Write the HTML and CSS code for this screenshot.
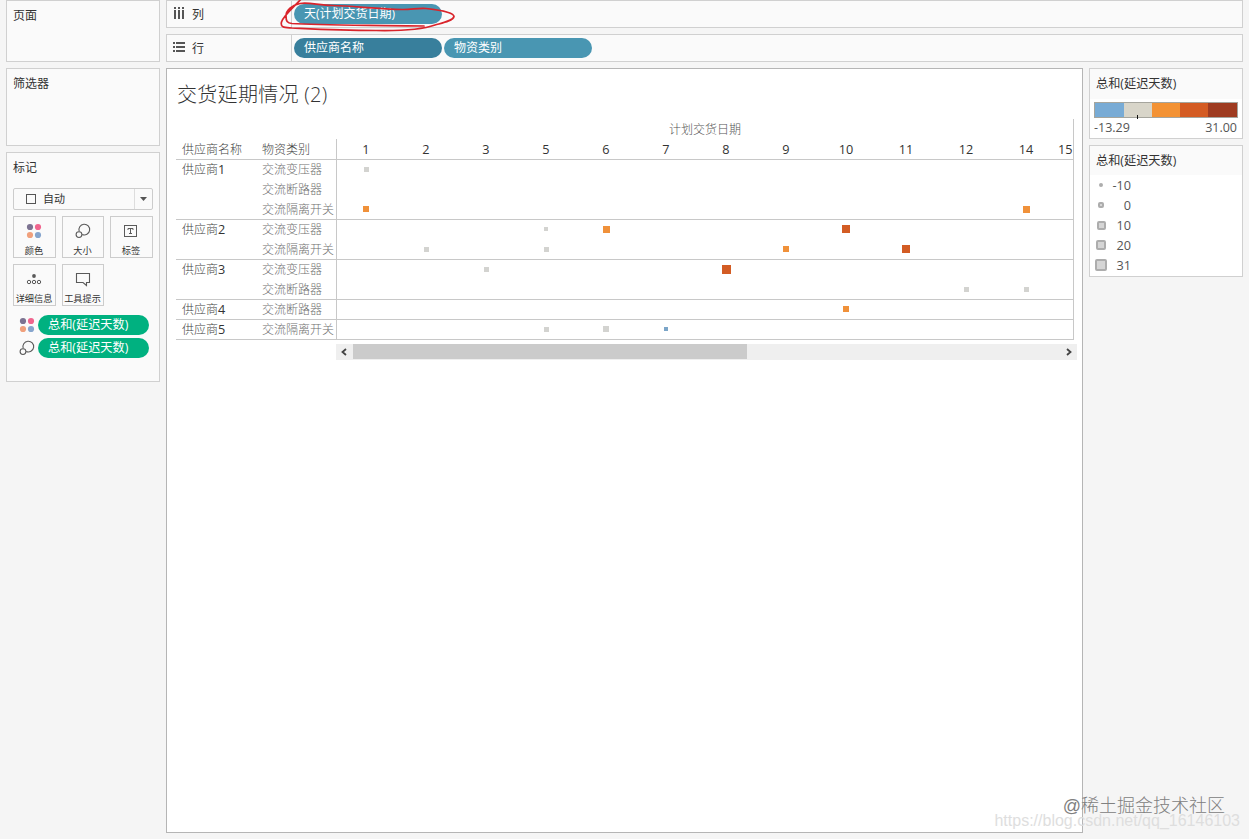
FILE: index.html
```html
<!DOCTYPE html>
<html lang="zh-CN">
<head>
<meta charset="utf-8">
<title>交货延期情况</title>
<link rel="stylesheet" href="styles.css">
</head>
<body>
<svg class="defs" width="0" height="0">
  <symbol id="i-color" viewBox="0 0 16 16"><circle cx="4" cy="4" r="3.1" fill="#7c7391"/><circle cx="12" cy="4" r="3.1" fill="#f0658e"/><circle cx="4" cy="12" r="3.1" fill="#f0a07c"/><circle cx="12" cy="12" r="3.1" fill="#86a5cd"/></symbol>
  <symbol id="i-size" viewBox="0 0 16 16"><g fill="none" stroke="#5a5a5a" stroke-width="1.100"><path d="M4.200 8.400A5.400 5.400 0 1 1 7.200 11.600"/><circle cx="4" cy="11.600" r="2.900"/></g></symbol>
</svg>
<div class="app">
  <aside class="side">
    <section class="card pages"><h2>页面</h2></section>
    <section class="card filters"><h2>筛选器</h2></section>
    <section class="card marks">
      <h2>标记</h2>
      <div class="select"><i class="box"></i><span>自动</span><b><svg width="7" height="4"><path d="M0 0H7L3.500 4Z" fill="#555"/></svg></b></div>
      <div class="buttons">
        <div class="btn"><svg width="16" height="16"><use href="#i-color"/></svg><span>颜色</span></div>
        <div class="btn"><svg width="16" height="16"><use href="#i-size"/></svg><span>大小</span></div>
        <div class="btn"><svg width="16" height="16" fill="none" stroke="#5a5a5a"><rect x="1.500" y="2.500" width="12" height="11"/><path d="M5 7V5.500H10V7M7.500 5.500V10.500M6 10.500H9"/></svg><span>标签</span></div>
        <div class="btn"><svg width="16" height="16" fill="none" stroke="#5a5a5a"><circle cx="8" cy="5" r="1.900" fill="#5a5a5a" stroke="none"/><circle cx="3" cy="11" r="1.700"/><circle cx="8" cy="11" r="1.700"/><circle cx="13" cy="11" r="1.700"/></svg><span>详细信息</span></div>
        <div class="btn"><svg width="16" height="16" fill="none" stroke="#5a5a5a" stroke-width="1.100"><path d="M1.500 2.500H14.500V11.500H11.500V14.500L8 11.500H1.500Z"/></svg><span>工具提示</span></div>
      </div>
      <div class="encodings">
        <div class="enc"><svg width="16" height="16"><use href="#i-color"/></svg><span class="pill green">总和(延迟天数)</span></div>
        <div class="enc"><svg width="16" height="16"><use href="#i-size"/></svg><span class="pill green">总和(延迟天数)</span></div>
      </div>
    </section>
  </aside>
  <main class="main">
    <div class="shelf">
      <div class="shelf-name"><svg width="12" height="12" fill="#555"><path d="M1 0h2v2H1zM1 3h2v9H1zM5 0h2v2H5zM5 3h2v9H5zM9 0h2v2H9zM9 3h2v9H9z"/></svg><span>列</span></div>
      <div class="pills"><span class="pill teal">天(计划交货日期)</span></div>
      <svg class="scribble" width="180" height="34" fill="none" stroke="#d9242b" stroke-width="1.700" stroke-linecap="round" stroke-linejoin="round"><path d="M23 0C18 6 5 17 3.500 23C2 29 7 28.500 14 29C35 30 60 31.500 98 31.500C125 32 143 31 157 26C164 24 175 22 176 17.500C176 14 163 11 148 9.500C143 9 136 10 125 10.500C100 10 75 7 55 6.500C40 6 30 3 22 4.500C14 6 8 11 8 17C8 22 9 24 14 24.500C40 26.500 90 26 146 27"/></svg>
    </div>
    <div class="shelf">
      <div class="shelf-name"><svg width="12" height="12" fill="#555"><path d="M0 1h2v2H0zM3 1h9v2H3zM0 5h2v2H0zM3 5h9v2H3zM0 9h2v2H0zM3 9h9v2H3z"/></svg><span>行</span></div>
      <div class="pills"><span class="pill dark">供应商名称</span><span class="pill teal">物资类别</span></div>
    </div>
    <div class="workspace">
      <section class="sheet">
        <h1>交货延期情况 (2)</h1>
        <div class="table">
          <div class="field">计划交货日期</div>
          <div class="head">
            <span class="c">供应商名称</span><span class="c">物资类别</span>
            <div class="days"><span>1</span><span>2</span><span>3</span><span>5</span><span>6</span><span>7</span><span>8</span><span>9</span><span>10</span><span>11</span><span>12</span><span>14</span><span class="last">15</span></div>
          </div>
          <div class="body">
            <div class="labels">
              <div class="group"><span class="c">供应商<em>1</em></span><ul><li>交流变压器</li><li>交流断路器</li><li>交流隔离开关</li></ul></div>
              <div class="group"><span class="c">供应商<em>2</em></span><ul><li>交流变压器</li><li>交流隔离开关</li></ul></div>
              <div class="group"><span class="c">供应商<em>3</em></span><ul><li>交流变压器</li><li>交流断路器</li></ul></div>
              <div class="group"><span class="c">供应商<em>4</em></span><ul><li>交流断路器</li></ul></div>
              <div class="group"><span class="c">供应商<em>5</em></span><ul><li>交流隔离开关</li></ul></div>
            </div>
            <svg class="plot" width="737" height="180" shape-rendering="crispEdges">
              <path d="M0 59.500H737M0 99.500H737M0 139.500H737M0 159.500H737M0 179.500H737M.5 0V180" stroke="#c8c8c8"/>
              <g fill="#d3d3d0">
                <rect x="28" y="7" width="5" height="5"/><rect x="208" y="67" width="4" height="4"/><rect x="88" y="87" width="5" height="5"/><rect x="208" y="87" width="5" height="5"/><rect x="148" y="107" width="5" height="5"/><rect x="628" y="127" width="5" height="5"/><rect x="688" y="127" width="5" height="5"/><rect x="208" y="167" width="5" height="5"/><rect x="267" y="166" width="6" height="6"/>
              </g>
              <g fill="#f0913a">
                <rect x="27" y="46" width="6" height="6"/><rect x="687" y="46" width="7" height="7"/><rect x="267" y="66" width="7" height="7"/><rect x="447" y="86" width="6" height="6"/><rect x="507" y="146" width="6" height="6"/>
              </g>
              <g fill="#d35c24">
                <rect x="506" y="65" width="8" height="8"/><rect x="566" y="85" width="8" height="8"/><rect x="386" y="105" width="9" height="9"/>
              </g>
              <rect x="328" y="167" width="4" height="4" fill="#7ba5c8"/>
            </svg>
          </div>
        </div>
        <div class="scroll"><i><svg width="7" height="9"><path d="M5 1L1.500 4L5 7" fill="none" stroke="#444" stroke-width="1.800"/></svg></i><b></b><i><svg width="7" height="9"><path d="M2 1L5.500 4L2 7" fill="none" stroke="#444" stroke-width="1.800"/></svg></i></div>
      </section>
      <aside class="legends">
        <section class="legend ramp">
          <h3>总和(延迟天数)</h3>
          <svg width="144" height="18" shape-rendering="crispEdges"><rect width="144" height="16" fill="#a5a59d"/><path fill="#78abd5" d="M1 1h29v14H1z"/><path fill="#d8d5c9" d="M30 1h28v14H30z"/><path fill="#f39234" d="M58 1h28v14H58z"/><path fill="#d45b22" d="M86 1h28v14H86z"/><path fill="#9f3b20" d="M114 1h29v14H114z"/><path fill="#111" d="M43 13h1v4h-1z"/></svg>
          <div class="range"><span>-13.29</span><span>31.00</span></div>
        </section>
        <section class="legend sizes">
          <h3>总和(延迟天数)</h3>
          <div class="size"><i><b class="s4"></b></i><span>-10</span></div>
          <div class="size"><i><b class="s6"></b></i><span>0</span></div>
          <div class="size"><i><b class="s9"></b></i><span>10</span></div>
          <div class="size"><i><b class="s10"></b></i><span>20</span></div>
          <div class="size"><i><b class="s12"></b></i><span>31</span></div>
        </section>
      </aside>
    </div>
  </main>
  <div class="url">https://blog.csdn.net/qq_16146103</div>
  <div class="credit">@稀土掘金技术社区</div>
</div>
</body>
</html>
```
FILE: styles.css
```css
* { box-sizing: border-box; }
body, h1, h2, h3, ul { margin: 0; padding: 0; font-weight: 400; }
li { list-style: none; }
i, em { font-style: normal; }
svg { display: block; flex: none; }
.defs { position: absolute; }
body {
  background: #f5f5f5;
  color: #333;
  font: 12px/20px "Open Sans", "Noto Sans CJK SC", sans-serif;
  overflow: hidden;
}
.app {
  position: relative;
  width: 1249px;
  height: 839px;
  padding: 0 6px 6px;
  display: grid;
  grid-template-columns: 154px 1077px;
  gap: 6px;
}
.side, .main { display: flex; flex-direction: column; gap: 6px; }
.card, .shelf, .legend { background: #fafafa; border: 1px solid #d0d0d0; }
.card { padding: 5px 6px; }
.card h2 { font-size: 12px; line-height: 20px; }
.pages { height: 62px; }
.filters { height: 78px; }
.marks { height: 230px; }

.select {
  display: flex;
  align-items: center;
  height: 22px;
  width: 140px;
  margin-top: 10px;
  border: 1px solid #ccc;
  border-radius: 2px;
  padding-left: 12px;
  font-size: 11px;
}
.select .box { width: 10px; height: 10px; border: 1px solid #555; margin-right: 7px; }
.select b {
  margin-left: auto;
  width: 18px;
  height: 20px;
  border-left: 1px solid #ddd;
  display: flex;
  align-items: center;
  justify-content: center;
}
.buttons { display: grid; grid-template-columns: 43px 42px 43px; gap: 6px; margin-top: 6px; }
.btn {
  height: 42px;
  border: 1px solid #ccc;
  display: flex;
  flex-direction: column;
  align-items: center;
  padding: 6px 1px 0 0;
}
.btn span { font-size: 9.200px; line-height: 12px; margin-top: 6px; white-space: nowrap; }
.encodings { display: flex; flex-direction: column; gap: 3px; margin-top: 9px; padding-left: 6px; }
.enc { display: flex; align-items: center; gap: 3px; }
.pill {
  display: block;
  height: 20px;
  line-height: 20px;
  border-radius: 10px;
  padding-left: 10px;
  color: #fff;
  width: 148px;
}
.green { background: #00b180; width: 111px; font-size: 12.200px; }
.teal { background: #4996b2; }
.dark { background: #387f9c; }

.shelf { position: relative; height: 28px; display: flex; flex: none; }
.shelf-name {
  width: 125px;
  border-right: 1px solid #d0d0d0;
  display: flex;
  gap: 7px;
  padding: 6px 0 0 6px;
}
.shelf-name span { line-height: 16px; }
.pills { display: flex; gap: 2px; padding: 3px 2px; }
.scribble { position: absolute; left: 111px; top: -2px; z-index: 2; }

.workspace { display: grid; grid-template-columns: 917px 154px; gap: 6px; flex: 1; }
.sheet { background: #fff; border: 1px solid #b5b5b5; padding: 11px 5px 0 9px; }
.sheet h1 { font-size: 20px; line-height: 30px; font-weight: 300; padding-left: 1px; letter-spacing: .3px; }
.table { width: 898px; margin-top: 9px; border-right: 1px solid #c8c8c8; }
.field { height: 20px; line-height: 22px; padding-left: 161px; text-align: center; color: #555; font-weight: 300; }
.head {
  display: grid;
  grid-template-columns: 80px 80px 737px;
  height: 21px;
  line-height: 22px;
  border-bottom: 1px solid #c8c8c8;
  color: #444;
  font-weight: 300;
}
.c { padding-left: 6px; }
.days { display: flex; overflow: hidden; border-left: 1px solid #c8c8c8; font-size: 12.700px; line-height: 20px; font-weight: 400; color: #333; }
.days span { width: 60px; flex: none; text-align: center; }
.days span:first-child { width: 59px; padding-right: 1px; }
.days .last { width: 17px; padding-left: 2px; text-align: left; }
.body { display: grid; grid-template-columns: 160px 737px; }
.group { display: grid; grid-template-columns: 80px 80px; box-shadow: inset 0 -1px #c8c8c8; }
.group .c { height: 18px; color: #444; line-height: 18px; font-weight: 300; }
.group em { font-size: 12.700px; font-weight: 400; color: #333; }
.group li { height: 20px; line-height: 20px; padding-left: 6px; white-space: nowrap; color: #707070; font-weight: 300; }
.scroll {
  display: flex;
  width: 741px;
  height: 16px;
  margin: 4px 0 0 160px;
  background: #efefef;
}
.scroll i { width: 17px; display: flex; align-items: center; justify-content: center; }
.scroll b { width: 394px; height: 15px; background: #cbcbcb; }
.scroll i:last-child { margin-left: auto; }

.legends { display: flex; flex-direction: column; gap: 6px; }
.legend { background: #fff; }
.legend h3 { font-size: 12.200px; line-height: 30px; background: #fafafa; padding-left: 6px; }
.ramp { height: 71px; }
.ramp svg { margin: 3px 0 0 4px; }
.range { display: flex; justify-content: space-between; padding: 0 5px 0 4px; line-height: 16px; font-size: 12.500px; color: #555; }
.sizes { height: 132px; }
.size { display: flex; align-items: center; height: 20px; font-size: 12.700px; color: #555; }
.sizes h3 { height: 29px; }
.size span { width: 19px; display: flex; justify-content: flex-end; white-space: nowrap; }
.size i { width: 22px; display: flex; justify-content: center; }
.size b { background: #d5d5d5; border: 2px solid #adadad; border-radius: 2px; }
.s4 { width: 4px; height: 4px; }
.s6 { width: 6px; height: 6px; }
.s9 { width: 9px; height: 9px; }
.s10 { width: 10px; height: 10px; }
.s12 { width: 12px; height: 12px; }

.url {
  position: absolute;
  right: 9px;
  bottom: 8px;
  font: 16px/20px "Liberation Sans", sans-serif;
  color: #dedede;
}
.credit {
  position: absolute;
  right: 24px;
  bottom: 21px;
  font: 18px/24px "Liberation Sans", "Noto Sans CJK SC", sans-serif;
  font-weight: 300;
  color: #808080;
}
```
